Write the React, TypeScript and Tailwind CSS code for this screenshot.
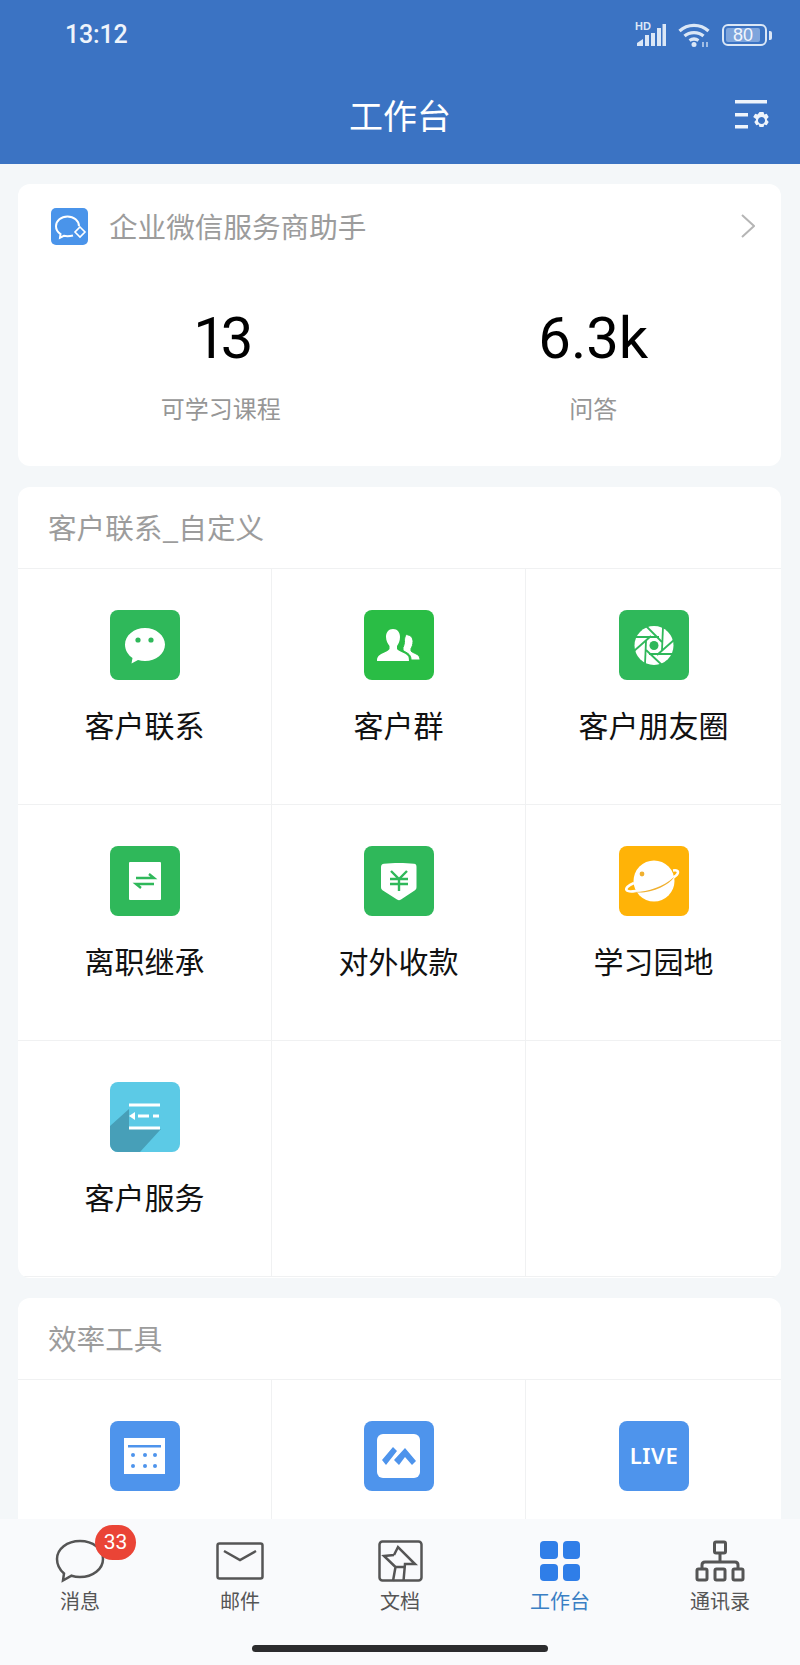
import type { ReactNode } from "react";

const CJK = "font-['Noto_Sans_CJK_SC','Noto_Sans',sans-serif]";

function Tile({ color, children }: { color: string; children: ReactNode }) {
  return (
    <div className={`relative h-[70px] w-[70px] overflow-hidden rounded-[8px] ${color}`}>
      <svg viewBox="0 0 70 70" className="h-full w-full">
        {children}
      </svg>
    </div>
  );
}

const chatIcon = (
  <>
    <path d="M35 18c11 0 20 7.500 20 16.500S46 51 35 51c-2.500 0-4.800-.4-7-1l-6.500 3.500 1-5.500C18 45 15 40 15 34.500 15 25.500 24 18 35 18z" fill="#fff" />
    <circle cx="28" cy="30" r="2.600" fill="#2fb85a" />
    <circle cx="41" cy="30" r="2.600" fill="#2fb85a" />
  </>
);

const groupIcon = (
  <>
    <path d="M29 19c4.500 0 7 3.500 7 8 0 4-1.500 7-3 9v3c2 2.500 8 3.500 11 7 1 1.200 1 5 1 5H13c0-2 .2-3.500 1.500-5 3-3 9-4 11-7v-3c-1.500-2-3.500-5-3.500-9 0-4.500 2.500-8 7-8z" fill="#fff" />
    <path d="M43.500 25c3.500 0 5.500 3 5.500 6.500 0 3-1 5.500-2 7v2.500c1.500 2 6 2.500 8 5 .8 1 1 4 1 4h-9c0-3-.5-4.500-3-6.500l-5-3v-3c1-2 1.500-4.500 1.500-7 0-3 1-6.500 3.500-6.500z" fill="#fff" stroke="#2abd45" strokeWidth="1" />
  </>
);

const shutterIcon = (
  <>
    <circle cx="35" cy="35.500" r="19.500" fill="#fff" />
    <g stroke="#2fb85a" strokeWidth="1.800">
      <line x1="27" y1="16" x2="43" y2="32" />
      <line x1="44" y1="17" x2="43" y2="40" />
      <line x1="55" y1="30" x2="38" y2="45" />
      <line x1="54" y1="44" x2="30" y2="44" />
      <line x1="43" y1="55" x2="27" y2="40" />
      <line x1="26" y1="54" x2="27" y2="31" />
      <line x1="15" y1="41" x2="32" y2="26" />
      <line x1="16" y1="27" x2="40" y2="27" />
    </g>
    <circle cx="35" cy="35.500" r="4.500" fill="#2fb85a" />
  </>
);

const transferIcon = (
  <>
    <rect x="19" y="16" width="32" height="38" fill="#fff" rx="1" />
    <path d="M26 32h18l-5-4M44 38H26l5 4" fill="none" stroke="#2fb85a" strokeWidth="2.400" />
  </>
);

const shieldIcon = (
  <>
    <path d="M17 21c0-2 1-3 3-3.300 9-1 21-1 30 0 2 .3 2.500 1.300 2.500 3.300v20c0 1.500-.5 2.500-1.500 3.200L37 53.500c-1.500 1-2.500 1-4 0l-14.500-9.300c-1-.7-1.500-1.700-1.500-3.200z" fill="#fff" />
    <path d="M27 25l8 8 8-8M35 33v12M26 33h18M26 38h18" fill="none" stroke="#2fb85a" strokeWidth="2.400" />
  </>
);

const planetIcon = (
  <>
    <circle cx="35" cy="35" r="20.500" fill="#fff" />
    <circle cx="23" cy="28" r="2.400" fill="#f0b030" />
    <path d="M15 37C9 39.500 6.500 42 7.500 44c1.500 3 14 1 26-3 13-4.500 26-11 25.500-15-.3-1.500-2-2-5-1.500" fill="none" stroke="#fff" strokeWidth="2.600" />
    <path d="M14 46c14 .5 30-5 41-15-5 9-26 18-41 15z" fill="#f0b030" />
  </>
);

const serviceIcon = (
  <>
    <path d="M19 27L0 44v26h30l21-23H19z" fill="#479fb8" />
    <path d="M19 23h31M19 46h31" stroke="#fff" strokeWidth="3" />
    <path d="M19 34l6-4v8z" fill="#fff" />
    <path d="M28 34h11M43 34h6" stroke="#fff" strokeWidth="3" />
  </>
);

const calendarIcon = (
  <>
    <rect x="14" y="17" width="41" height="36" fill="#fff" />
    <rect x="18" y="24" width="33" height="2.500" fill="#4e94ec" />
    {[23, 35, 45].map((cx) => (
      <g key={cx} fill="#4e94ec">
        <circle cx={cx} cy="34" r="2" />
        <circle cx={cx} cy="45" r="2" />
      </g>
    ))}
  </>
);

const meetingIcon = (
  <>
    <rect x="13" y="13" width="43" height="44" rx="6" fill="#fff" />
    <path d="M18 39l11-13 4 4-11 14zM41 27l11 13-4 4-7-8-6 8-5-5z" fill="#4e94ec" />
  </>
);

const apps = [
  { label: "客户联系", color: "bg-[#2fb85a]", icon: chatIcon },
  { label: "客户群", color: "bg-[#2abd45]", icon: groupIcon },
  { label: "客户朋友圈", color: "bg-[#2fb85a]", icon: shutterIcon },
  { label: "离职继承", color: "bg-[#2fb85a]", icon: transferIcon },
  { label: "对外收款", color: "bg-[#2fb85a]", icon: shieldIcon },
  { label: "学习园地", color: "bg-[#ffb307]", icon: planetIcon },
  { label: "客户服务", color: "bg-[#5ccae6]", icon: serviceIcon },
];

function AppCell({ label, color, icon }: { label?: string; color?: string; icon?: ReactNode }) {
  return (
    <div className="flex h-[236px] flex-col items-center border-r border-b border-[#f0f1f2] pt-[41px] [&:nth-child(3n)]:border-r-0">
      {color && <Tile color={color}>{icon}</Tile>}
      {label && <div className={`mt-[24px] text-[30px] leading-[40px] text-[#111] ${CJK}`}>{label}</div>}
    </div>
  );
}

function StatusIcons() {
  return (
    <div className="flex items-center gap-[12px]">
      <div className="relative h-[22px] w-[29px]">
        <span className="absolute left-[-2px] top-[-3px] font-['Liberation_Sans'] text-[11px] font-bold leading-[11px] text-[#dbe7f6]">HD</span>
        <svg viewBox="0 0 29 22" className="h-full w-full" fill="#dbe7f6">
          <path d="M0 22v-3l6-4v7zM8 22V11h4v11zM14 22V9h4v13zM20 22V4h4v18zM25.500 22V0H29v22z" />
        </svg>
      </div>
      <svg viewBox="0 0 32 24" className="h-[24px] w-[32px]" fill="none" stroke="#dbe7f6" strokeWidth="3.200">
        <path d="M1.500 8c8-7.500 21-7.500 29 0M6.500 13c5-4.500 14-4.500 19 0M11.500 17.500c3-2 6-2 9 0" />
        <circle cx="16" cy="21.500" r="2.500" fill="#dbe7f6" stroke="none" />
        <path d="M25 19v5M29 19v5" strokeWidth="1.300" />
      </svg>
      <div className="flex items-center gap-[2px]">
        <div className="flex h-[22px] w-[45px] items-center rounded-[6px] border-2 border-[#dbe7f6] p-[2px]">
          <div className="flex h-full w-[92%] items-center justify-center rounded-[2px] bg-[#7ea5dc] font-['Liberation_Sans'] text-[18px] leading-none text-[#f2f6fc]">80</div>
        </div>
        <div className="h-[9px] w-[3px] rounded-r-[2px] bg-[#dbe7f6]" />
      </div>
    </div>
  );
}

function Tab({ label, active, children }: { label: string; active?: boolean; children: ReactNode }) {
  return (
    <div className="relative flex w-[160px] flex-col items-center">
      <div className="flex h-[44px] w-[60px] items-center justify-center">{children}</div>
      <div className={`mt-[4px] text-[20px] leading-[28px] ${CJK} ${active ? "text-[#3a7fc4]" : "text-[#555]"}`}>{label}</div>
    </div>
  );
}

export default function App() {
  return (
    <div className={`flex h-[1665px] w-[800px] flex-col overflow-hidden bg-[#f4f7f9] ${CJK}`}>
      <header className="relative h-[164px] shrink-0 bg-[#3b73c3]">
        <div className="flex items-center justify-between pl-[65px] pr-[28px] pt-[21px]">
          <span className="font-['Roboto'] text-[25px] font-medium leading-[28px] tracking-[-0.2px] text-[#eef4fb]">13:12</span>
          <StatusIcons />
        </div>
        <div className="mt-[42px] text-center text-[34px] leading-[48px] text-white">工作台</div>
        <svg viewBox="0 0 36 30" className="absolute right-[29px] top-[100px] h-[30px] w-[36px]" fill="#eef4fb">
          <path d="M0 0h32v3.500H0zM0 13h13v3.500H0zM0 25h13v3.500H0z" />
          <path fillRule="evenodd" d="M24.500 12h4l.8 2.500 2.400-.8 2 3.300-1.800 1.900.1 1.200 1.700 1.900-2 3.300-2.400-.8-.8 2.500h-4l-.8-2.500-2.400.8-2-3.300 1.700-1.900v-1.200L18.200 17l2-3.300 2.400.8zm2 5a3.500 3.500 0 1 0 .01 0z" />
        </svg>
      </header>

      <main className="flex min-h-0 flex-1 flex-col gap-[21px] overflow-hidden pl-[18px] pr-[19px] pt-[20px]">
        <section className="h-[282px] shrink-0 rounded-[12px] bg-white">
          <div className="flex items-center pl-[33px] pr-[26px] pt-[22px]">
            <div className="flex h-[37px] w-[37px] items-center justify-center rounded-[5px] bg-[#4a94ea]">
              <svg viewBox="0 0 37 37" className="h-[37px] w-[37px]" fill="none" stroke="#fff" strokeWidth="2">
                <path d="M22 27.500c-1.800.5-3.600.7-5.500.7-1.300 0-2.500-.1-3.700-.4l-3.800 2 .5-3.700C6.800 24.300 5 21.500 5 18.300 5 12.800 10.200 8.500 16.500 8.500S28 12.800 28 18.300" />
                <path d="M29 19l5 5-5 5-5-5z" strokeWidth="1.600" />
              </svg>
            </div>
            <span className="ml-[21px] text-[28.6px] leading-[40px] text-[#9c9c9c]">企业微信服务商助手</span>
            <svg viewBox="0 0 14 24" className="ml-auto h-[24px] w-[14px]" fill="none" stroke="#b5b5b5" strokeWidth="2">
              <path d="M1 1l12 11L1 23" />
            </svg>
          </div>
          <div className="mt-[59px] grid grid-cols-2">
            <div className="flex flex-col items-center pl-[24px]">
              <span className="font-['Roboto'] text-[58px] leading-[66px] tracking-[-5px] text-black">13</span>
              <span className="mt-[19px] text-[24px] leading-[36px] text-[#969696]">可学习课程</span>
            </div>
            <div className="flex flex-col items-center pl-[6px]">
              <span className="font-['Roboto'] text-[58px] leading-[66px] text-black">6.3k</span>
              <span className="mt-[19px] text-[24px] leading-[36px] text-[#969696]">问答</span>
            </div>
          </div>
        </section>

        <section className="shrink-0 overflow-hidden rounded-[12px] bg-white pb-[1px]">
          <div className="flex h-[82px] items-center border-b border-[#f0f1f2] pl-[30px] text-[28.6px] text-[#9c9c9c]">客户联系_自定义</div>
          <div className="grid grid-cols-[254px_254px_255px]">
            {apps.map((app) => (
              <AppCell key={app.label} {...app} />
            ))}
            <AppCell />
            <AppCell />
          </div>
        </section>

        <section className="-mt-[1px] shrink-0 rounded-[12px] bg-white">
          <div className="flex h-[82px] items-center border-b border-[#f0f1f2] pl-[30px] text-[28.6px] text-[#9c9c9c]">效率工具</div>
          <div className="grid grid-cols-[254px_254px_255px]">
            <AppCell color="bg-[#4e94ec]" icon={calendarIcon} />
            <AppCell color="bg-[#4e94ec]" icon={meetingIcon} />
            <AppCell
              color="bg-[#4e94ec]"
              icon={
                <text x="35" y="43" textAnchor="middle" fill="#fff" fontSize="22" fontWeight="600" letterSpacing="0.5" fontFamily="'Noto Sans', sans-serif">
                  LIVE
                </text>
              }
            />
          </div>
        </section>
      </main>

      <nav className="relative h-[146px] shrink-0 bg-[#f9fafc] pt-[20px]">
        <div className="flex">
          <Tab label="消息">
            <div className="relative">
              <svg viewBox="0 0 50 44" className="h-[44px] w-[50px]" fill="none" stroke="#555" strokeWidth="2.500">
                <path d="M25 2c13 0 23 8 23 18s-10 18-23 18c-3 0-6-.5-8.500-1.300L8 41.500l1-7C5 31 2 26 2 20 2 10 12 2 25 2z" />
              </svg>
              <div className="absolute left-[40px] top-[-14px] flex h-[35px] w-[41px] items-center justify-center rounded-full bg-[#ea4436] font-['Roboto'] text-[21px] leading-none text-white">33</div>
            </div>
          </Tab>
          <Tab label="邮件">
            <svg viewBox="0 0 48 38" className="h-[38px] w-[48px]" fill="none" stroke="#555" strokeWidth="2.500">
              <rect x="1.500" y="1.500" width="45" height="35" rx="2" />
              <path d="M8 9l16 9 16-9" />
            </svg>
          </Tab>
          <Tab label="文档">
            <svg viewBox="0 0 45 42" className="h-[42px] w-[45px]" fill="none" stroke="#555" strokeWidth="2.500">
              <rect x="1.500" y="1.500" width="42" height="39" rx="3" />
              <path d="M16 15L20 7l17 17H27l-1.500 17M15 41l2.500-14L6 16l10-1M17.500 27H27" />
            </svg>
          </Tab>
          <Tab label="工作台" active>
            <div className="grid grid-cols-2 gap-[5px]">
              <div className="h-[17.5px] w-[17.5px] rounded-[4px] bg-[#2f7ee8]" />
              <div className="h-[17.5px] w-[17.5px] rounded-[4px] bg-[#2f7ee8]" />
              <div className="h-[17.5px] w-[17.5px] rounded-[4px] bg-[#2f7ee8]" />
              <div className="h-[17.5px] w-[17.5px] rounded-[4px] bg-[#2f7ee8]" />
            </div>
          </Tab>
          <Tab label="通讯录">
            <svg viewBox="0 0 52 42" className="h-[42px] w-[52px]" fill="none" stroke="#555" strokeWidth="3">
              <rect x="20.500" y="2" width="11" height="11" rx="1.500" />
              <rect x="3" y="29" width="10" height="11" rx="1.500" />
              <rect x="21" y="29" width="10" height="11" rx="1.500" />
              <rect x="39" y="29" width="10" height="11" rx="1.500" />
              <path d="M8 29v-4c0-2 1-3 3-3h30c2 0 3 1 3 3v4M26 13v9" />
            </svg>
          </Tab>
        </div>
        <div className="absolute bottom-[13px] left-[252px] h-[7px] w-[296px] rounded-full bg-[#2c2c2e]" />
      </nav>
    </div>
  );
}
